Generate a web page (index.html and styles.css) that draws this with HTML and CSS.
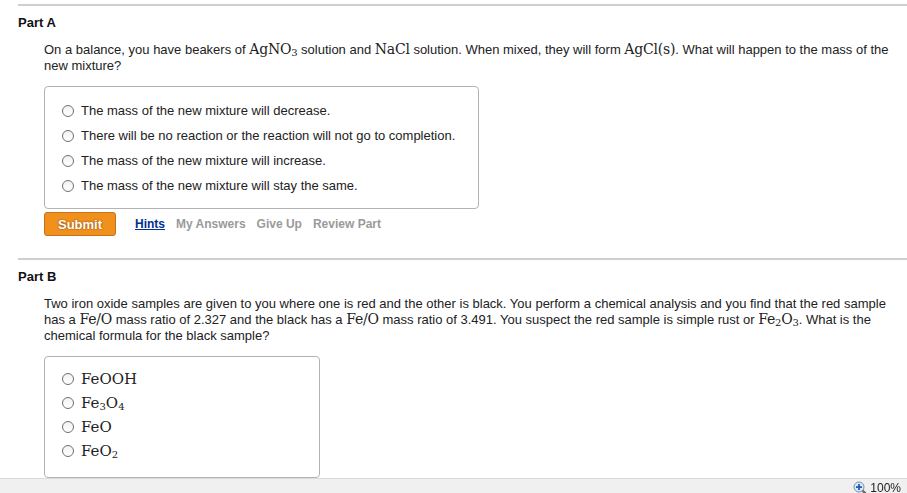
FILE: index.html
```html
<!DOCTYPE html>
<html>
<head>
<meta charset="utf-8">
<link rel="stylesheet" href="styles.css">
</head>
<body>
<div class="page">
  <section class="part">
    <hr class="rule">
    <h2 class="part-title">Part A</h2>
    <div class="content">
      <p class="question">On a balance, you have beakers of <span class="m">AgNO<sub>3</sub></span> solution and <span class="m">NaCl</span> solution. When mixed, they will form <span class="m">AgCl(s)</span>. What will happen to the mass of the new mixture?</p>
      <div class="choices choices-a">
        <label class="choice"><span class="radio"></span><span>The mass of the new mixture will decrease.</span></label>
        <label class="choice"><span class="radio"></span><span>There will be no reaction or the reaction will not go to completion.</span></label>
        <label class="choice"><span class="radio"></span><span>The mass of the new mixture will increase.</span></label>
        <label class="choice"><span class="radio"></span><span>The mass of the new mixture will stay the same.</span></label>
      </div>
      <div class="actions">
        <button class="submit">Submit</button>
        <a class="link link-hints">Hints</a>
        <span class="link link-off">My Answers</span>
        <span class="link link-off">Give Up</span>
        <span class="link link-off">Review Part</span>
      </div>
    </div>
  </section>
  <section class="part part-b">
    <hr class="rule">
    <h2 class="part-title">Part B</h2>
    <div class="content">
      <p class="question">Two iron oxide samples are given to you where one is red and the other is black. You perform a chemical analysis and you find that the red sample has a <span class="m">Fe/O</span> mass ratio of 2.327 and the black has a <span class="m">Fe/O</span> mass ratio of 3.491. You suspect the red sample is simple rust or <span class="m">Fe<sub>2</sub>O<sub>3</sub></span>. What is the chemical formula for the black sample?</p>
      <div class="choices choices-b">
        <label class="choice"><span class="radio"></span><span class="mc">FeOOH</span></label>
        <label class="choice"><span class="radio"></span><span class="mc">Fe<sub>3</sub>O<sub>4</sub></span></label>
        <label class="choice"><span class="radio"></span><span class="mc">FeO</span></label>
        <label class="choice"><span class="radio"></span><span class="mc">FeO<sub>2</sub></span></label>
      </div>
    </div>
  </section>
</div>
<div class="statusbar">
  <svg class="zoom-icon" width="14" height="14" viewBox="0 0 14 14">
    <line x1="8.5" y1="8.5" x2="12.5" y2="12.5" stroke="#6a6a6a" stroke-width="2.4" stroke-linecap="round"/>
    <circle cx="6" cy="6" r="5" fill="#dce8f6" stroke="#7b8fa8" stroke-width="1"/>
    <rect x="3" y="5.2" width="6" height="1.8" fill="#1e5fb8"/>
    <rect x="5.1" y="3" width="1.8" height="6" fill="#1e5fb8"/>
  </svg>
  <span class="zoom-text">100%</span>
</div>
</body>
</html>
```
FILE: styles.css
```css
html, body {
  margin: 0;
  padding: 0;
  background: #fff;
}
body {
  font-family: "Liberation Sans", Arial, sans-serif;
  font-size: 13px;
  color: #222;
}
.page {
  padding: 4px 0 0 18px;
}
.rule {
  margin: 0;
  border: 0;
  height: 2px;
  background: #cfcfcf;
}
.part-title {
  margin: 9px 0 0 0;
  font-size: 13px;
  font-weight: bold;
  line-height: 16px;
  color: #111;
}
.content {
  padding-left: 26px;
}
.question {
  margin: 11px 0 0 0;
  line-height: 16px;
  padding-right: 12px;
}
.m {
  font-family: "DejaVu Serif", "Liberation Serif", serif;
  font-size: 14px;
  letter-spacing: -0.2px;
  line-height: 0;
}
.m sub, .mc sub {
  font-size: 10px;
  line-height: 0;
  vertical-align: -2px;
}
.choices {
  margin-top: 12px;
  border: 1px solid #b3b3b3;
  border-radius: 4px;
  padding: 16px 0 0 17px;
  display: flex;
  flex-direction: column;
  gap: 9px;
  box-sizing: border-box;
}
.choices-a {
  width: 435px;
  height: 123px;
}
.choices-b {
  width: 276px;
  height: 122px;
  padding-top: 14px;
  gap: 8px;
}
.choice {
  display: flex;
  align-items: center;
  gap: 7px;
  line-height: 16px;
  height: 16px;
}
.radio {
  width: 10px;
  height: 10px;
  border: 1px solid #707070;
  border-radius: 50%;
  background: linear-gradient(#f2f2f2, #fff);
  flex: none;
}
.mc {
  font-family: "DejaVu Serif", "Liberation Serif", serif;
  font-size: 15px;
  line-height: 16px;
}
.actions {
  margin-top: 3px;
  display: flex;
  align-items: center;
  gap: 11px;
  font-size: 12px;
  font-weight: bold;
}
.submit {
  width: 72px;
  height: 24px;
  background: #f0901d;
  border: 1px solid #c9701a;
  border-radius: 3px;
  color: #fff;
  font-family: "Liberation Sans", Arial, sans-serif;
  font-weight: bold;
  font-size: 13px;
  text-shadow: 0 0 2px #7a3d00;
  padding: 0;
  margin-right: 8px;
}
.link-hints {
  color: #002f8f;
  text-decoration: underline;
}
.link-off {
  color: #9a9a9a;
}
.part-b {
  margin-top: 22px;
}
.statusbar {
  position: fixed;
  left: 0;
  right: 0;
  bottom: 0;
  height: 14px;
  background: #f0f0f0;
  border-top: 1px solid #dadada;
  display: flex;
  justify-content: flex-end;
  align-items: center;
  gap: 3px;
  padding-right: 6px;
  font-family: "Liberation Sans", Arial, sans-serif;
  font-size: 12px;
  color: #222;
}
.zoom-icon {
  margin-top: 3px;
}
.zoom-text {
  margin-top: 4px;
}
```
